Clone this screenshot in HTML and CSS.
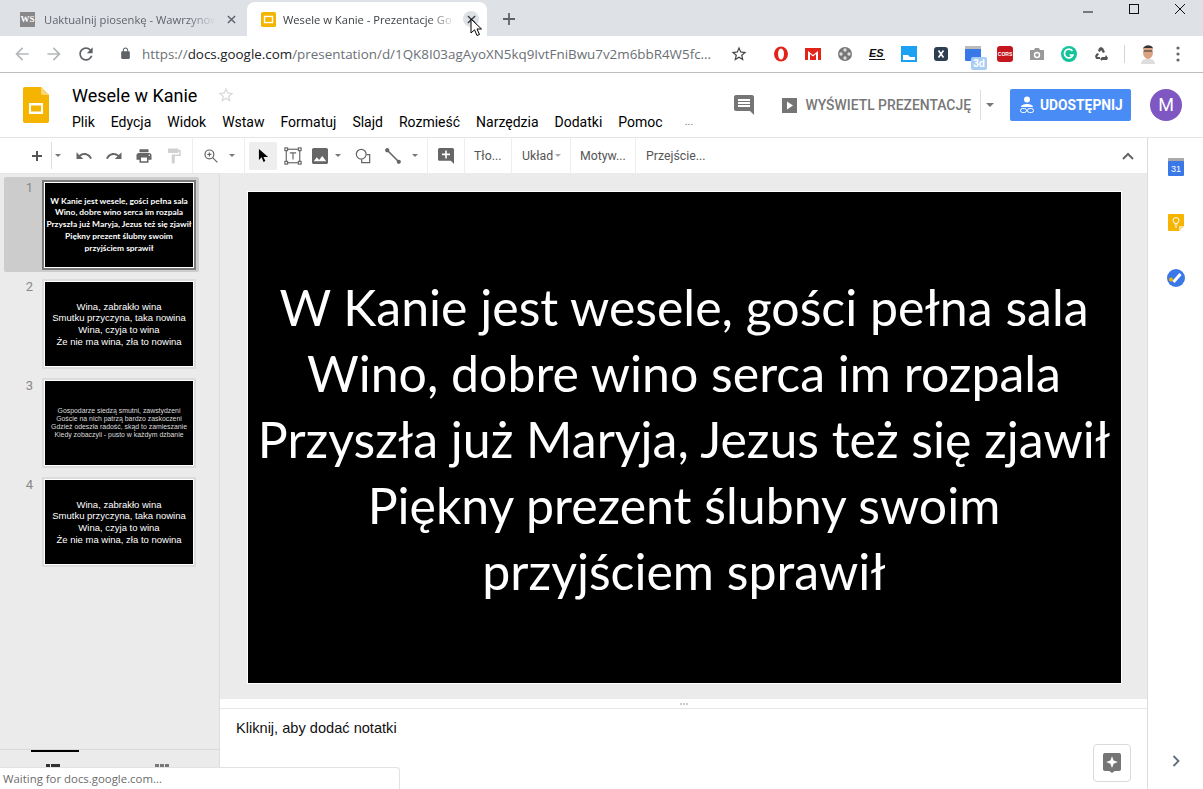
FILE: index.html
```html
<!DOCTYPE html>
<html lang="pl">
<head>
    <meta charset="UTF-8">
    <title>Wesele w Kanie - Prezentacje Google</title>
    <link rel="stylesheet" href="styles.css">
</head>
<body>
    <!-- pasek kart -->
    <div class="tabstrip">
        <div class="tab">
            <span class="favicon-ws">WS</span>
            <span class="tab-title">Uaktualnij piosenkę - Wawrzynow</span>
            <svg class="tab-close" viewBox="0 0 10 10"><path d="M1 1l8 8M9 1l-8 8"/></svg>
        </div>
        <div class="tab tab-active">
            <svg class="favicon" viewBox="0 0 16 16"><rect width="16" height="16" rx="2" fill="#f4b400"/><rect x="3" y="4" width="10" height="8" fill="#fff"/><rect x="4.5" y="5.5" width="7" height="5" fill="#f4b400"/></svg>
            <span class="tab-title">Wesele w Kanie - Prezentacje Go</span>
            <span class="tab-close-round"><svg class="tab-close" viewBox="0 0 10 10"><path d="M1 1l8 8M9 1l-8 8"/></svg></span>
        </div>
        <svg class="new-tab" viewBox="0 0 12 12"><path d="M6 0v12M0 6h12"/></svg>
        <div class="window-controls">
            <svg viewBox="0 0 12 12"><path d="M1 9h10"/></svg>
            <svg viewBox="0 0 12 12"><rect x="1.5" y="1.5" width="9" height="9"/></svg>
            <svg viewBox="0 0 12 12"><path d="M1 1l10 10M11 1l-10 10"/></svg>
        </div>
    </div>

    <!-- pasek adresu -->
    <div class="addressbar">
        <svg class="nav-icon nav-off" viewBox="0 0 24 24"><path d="M20 11H7.83l5.59-5.59L12 4l-8 8 8 8 1.41-1.41L7.83 13H20v-2z"/></svg>
        <svg class="nav-icon nav-off" viewBox="0 0 24 24"><path d="M12 4l-1.41 1.41L16.17 11H4v2h12.17l-5.58 5.59L12 20l8-8z"/></svg>
        <svg class="nav-icon" viewBox="0 0 24 24"><path d="M17.65 6.35C16.2 4.9 14.21 4 12 4c-4.42 0-7.99 3.58-7.99 8s3.57 8 7.99 8c3.73 0 6.84-2.55 7.73-6h-2.08c-.82 2.33-3.04 4-5.65 4-3.31 0-6-2.69-6-6s2.69-6 6-6c1.66 0 3.14.69 4.22 1.78L13 11h7V4l-2.35 2.35z"/></svg>
        <svg class="lock" viewBox="0 0 24 24"><path d="M18 8h-1V6c0-2.76-2.24-5-5-5S7 3.24 7 6v2H6c-1.1 0-2 .9-2 2v10c0 1.1.9 2 2 2h12c1.1 0 2-.9 2-2V10c0-1.1-.9-2-2-2zm-2.9 0H8.9V6c0-1.71 1.39-3.1 3.1-3.1 1.71 0 3.1 1.39 3.1 3.1v2z"/></svg>
        <div class="url"><span class="url-dim">https://</span>docs.google.com<span class="url-dim">/presentation/d/1QK8I03agAyoXN5kq9IvtFniBwu7v2m6bbR4W5fc...</span></div>
        <svg class="url-star" viewBox="0 0 24 24"><path d="M22 9.24l-7.19-.62L12 2 9.19 8.63 2 9.24l5.46 4.73L5.82 21 12 17.27 18.18 21l-1.63-7.03L22 9.24zM12 15.4l-3.76 2.27 1-4.28-3.32-2.88 4.38-.38L12 6.1l1.71 4.04 4.38.38-3.32 2.88 1 4.28L12 15.4z"/></svg>
        <div class="extensions">
            <svg viewBox="0 0 16 16"><ellipse cx="8" cy="8" rx="7" ry="7.5" fill="#e2231a"/><ellipse cx="8" cy="8" rx="3" ry="5.5" fill="#fff"/></svg>
            <svg viewBox="0 0 16 16"><rect y="2" width="16" height="12" fill="#e2231a"/><path d="M3 14V5l5 4 5-4v9z" fill="#fff"/><path d="M5 14V8l3 2.5L11 8v6z" fill="#e2231a"/></svg>
            <svg viewBox="0 0 16 16"><circle cx="8" cy="8" r="7" fill="#777"/><circle cx="8" cy="4" r="1.7" fill="#ddd"/><circle cx="8" cy="12" r="1.7" fill="#ddd"/><circle cx="4" cy="8" r="1.7" fill="#ddd"/><circle cx="12" cy="8" r="1.7" fill="#ddd"/></svg>
            <span class="ext-es">ES</span>
            <svg viewBox="0 0 16 16"><rect width="16" height="16" fill="#1da1f2"/><path d="M2 9h5l2 2h5v3H2z" fill="#fff"/></svg>
            <svg viewBox="0 0 16 16"><rect x="1" y="1" width="14" height="14" rx="3" fill="#2c3e50"/><path d="M5.5 4.5l5 7M10.5 4.5l-5 7" stroke="#fff" stroke-width="1.6"/></svg>
            <span class="ext-3d"><svg viewBox="0 0 16 16"><rect y="2" width="16" height="13" rx="1" fill="#3b78e7"/><rect y="0" width="16" height="3" fill="#bbb"/></svg><b>3d</b></span>
            <span class="ext-cors">CORS</span>
            <svg viewBox="0 0 16 16"><path d="M1 4h4l1-2h4l1 2h4v10H1z" fill="#999"/><circle cx="8" cy="9" r="3.2" fill="#fff"/><circle cx="8" cy="9" r="1.8" fill="#999"/></svg>
            <svg viewBox="0 0 16 16"><circle cx="8" cy="8" r="8" fill="#15c39a"/><path d="M11.5 5A4.4 4.4 0 1 0 12 9H8.6" fill="none" stroke="#fff" stroke-width="1.7"/></svg>
            <svg viewBox="0 0 16 16"><path d="M6 2l2-1 2 1 2 4-2 1-2-3-1 2-2-1zM2 10l2-3 2 1-2 3h3v2H3zM9 11h3l1-2 2 3-1 2H9v1l-2-2 2-2z" fill="#555"/></svg>
        </div>
        <div class="ext-separator"></div>
        <svg class="profile-face" viewBox="0 0 16 20"><path d="M1 20c0-4 3-5 7-5s7 1 7 5z" fill="#ddd"/><ellipse cx="8" cy="8" rx="5" ry="7" fill="#d9a283"/><path d="M3 5c0-4 10-5 10 0l-1-1H4z" fill="#333"/><path d="M4 7h8" stroke="#333"/></svg>
        <svg class="chrome-menu" viewBox="0 0 4 16"><circle cx="2" cy="2" r="1.6"/><circle cx="2" cy="8" r="1.6"/><circle cx="2" cy="14" r="1.6"/></svg>
    </div>

    <!-- naglowek dokumentu -->
    <header class="docs-header">
        <svg class="slides-logo" viewBox="0 0 26 36"><path d="M2 0h16l8 8v26a2 2 0 0 1-2 2H2a2 2 0 0 1-2-2V2a2 2 0 0 1 2-2z" fill="#f4b400"/><path d="M18 0l8 8h-6a2 2 0 0 1-2-2z" fill="#f8d775"/><rect x="6" y="16" width="14" height="11" fill="#fff"/><rect x="8" y="18.500" width="10" height="6" fill="#f4b400"/></svg>
        <div class="doc-info">
            <div class="doc-title-row">
                <span class="doc-title">Wesele w Kanie</span>
                <svg class="doc-star" viewBox="0 0 24 24"><path d="M22 9.24l-7.19-.62L12 2 9.19 8.63 2 9.24l5.46 4.73L5.82 21 12 17.27 18.18 21l-1.63-7.03L22 9.24zM12 15.4l-3.76 2.27 1-4.28-3.32-2.88 4.38-.38L12 6.1l1.71 4.04 4.38.38-3.32 2.88 1 4.28L12 15.4z"/></svg>
            </div>
            <ul class="menu">
                <li>Plik</li>
                <li>Edycja</li>
                <li>Widok</li>
                <li>Wstaw</li>
                <li>Formatuj</li>
                <li>Slajd</li>
                <li>Rozmieść</li>
                <li>Narzędzia</li>
                <li>Dodatki</li>
                <li>Pomoc</li>
                <li class="menu-more">...</li>
            </ul>
        </div>
        <div class="header-actions">
            <svg class="comments-icon" viewBox="0 0 24 24"><path d="M21.99 4c0-1.1-.89-2-1.99-2H4c-1.1 0-2 .9-2 2v12c0 1.1.9 2 2 2h14l4 4-.01-18zM18 14H6v-2h12v2zm0-3H6V9h12v2zm0-3H6V6h12v2z"/></svg>
            <svg class="present-icon" viewBox="0 0 15 15"><rect width="15" height="15" fill="#757575"/><path d="M5 3.500l6 4-6 4z" fill="#fff"/></svg>
            <span class="present-label">WYŚWIETL PREZENTACJĘ</span>
            <span class="present-split"></span>
            <span class="caret caret-big"></span>
            <button class="share-btn">
                <svg viewBox="0 0 16 18"><circle cx="8" cy="3.500" r="3" fill="#fff"/><path d="M2 11c0-2 3-3 6-3s6 1 6 3z" fill="#fff"/><rect x="1.500" y="12.500" width="6" height="4" rx="2" fill="none" stroke="#fff"/><rect x="8.500" y="12.500" width="6" height="4" rx="2" fill="none" stroke="#fff"/></svg>
                UDOSTĘPNIJ
            </button>
            <span class="avatar">M</span>
        </div>
    </header>

    <div class="workspace">
        <div class="editor">
            <!-- pasek narzedzi -->
            <div class="toolbar">
                <svg class="tb-plus" viewBox="0 0 12 12"><path d="M6 1v10M1 6h10"/></svg>
                <span class="tb-split"></span>
                <span class="caret tb-caret"></span>
                <svg class="tb-icon tb-undo" viewBox="0 0 24 24"><path d="M12.500 8c-2.650 0-5.050.99-6.900 2.600L2 7v9h9l-3.620-3.620c1.390-1.160 3.160-1.880 5.120-1.880 3.540 0 6.550 2.310 7.600 5.500l2.370-.78C21.080 11.030 17.150 8 12.500 8z"/></svg>
                <svg class="tb-icon" viewBox="0 0 24 24"><path d="M18.400 10.600C16.550 8.990 14.150 8 11.500 8c-4.650 0-8.580 3.030-9.960 7.220L3.900 16c1.050-3.190 4.050-5.500 7.600-5.500 1.950 0 3.730.72 5.120 1.880L13 16h9V7l-3.600 3.600z"/></svg>
                <svg class="tb-icon" viewBox="0 0 24 24"><path d="M19 8H5c-1.660 0-3 1.340-3 3v6h4v4h12v-4h4v-6c0-1.660-1.340-3-3-3zm-3 11H8v-5h8v5zm3-7c-.55 0-1-.45-1-1s.45-1 1-1 1 .45 1 1-.45 1-1 1zm-1-9H6v4h12V3z"/></svg>
                <svg class="tb-icon tb-faded" viewBox="0 0 24 24"><path d="M18 4V3c0-.55-.45-1-1-1H5c-.55 0-1 .45-1 1v4c0 .55.45 1 1 1h12c.55 0 1-.45 1-1V6h1v4H9v11c0 .55.45 1 1 1h2c.55 0 1-.45 1-1v-9h8V4h-3z"/></svg>
                <span class="tb-sep tb-sep-a"></span>
                <svg class="tb-icon tb-zoom" viewBox="0 0 20 20"><circle cx="8" cy="8" r="5.500"/><path d="M12 12l6 6M8 5.500v5M5.500 8h5"/></svg>
                <span class="caret tb-caret tb-caret-zoom"></span>
                <span class="tb-sep tb-sep-b"></span>
                <span class="tb-select"><svg viewBox="0 0 12 16"><path d="M1 1v12l3-3 2 5 2-1-2-4.500h5z"/></svg></span>
                <svg class="tb-textbox" viewBox="0 0 20 20"><rect x="2.500" y="2.500" width="15" height="15"/><rect x="1" y="1" width="3" height="3"/><rect x="16" y="1" width="3" height="3"/><rect x="1" y="16" width="3" height="3"/><rect x="16" y="16" width="3" height="3"/><path d="M6.500 6.500h7M10 6.500v7.500"/></svg>
                <svg class="tb-icon tb-image" viewBox="3 3 18 18"><path d="M21 19V5c0-1.100-.9-2-2-2H5c-1.100 0-2 .9-2 2v14c0 1.100.9 2 2 2h14c1.100 0 2-.9 2-2zM8.500 13.500l2.500 3.010L14.500 12l4.500 6H5l3.500-4.500z"/></svg>
                <span class="caret tb-caret tb-caret-image"></span>
                <svg class="tb-shape" viewBox="0 0 18 18"><circle cx="7" cy="7" r="5.500"/><path d="M13 7.500h3.500v9H7.500V13"/></svg>
                <svg class="tb-line" viewBox="0 0 18 18"><path d="M2.500 2.500l13 13"/><circle cx="2.500" cy="2.500" r="1.500"/><circle cx="15.500" cy="15.500" r="1.500"/></svg>
                <span class="caret tb-caret tb-caret-line"></span>
                <span class="tb-sep tb-sep-c"></span>
                <svg class="tb-icon tb-newcomment" viewBox="2 2 20 20"><path d="M22 4c0-1.100-.9-2-2-2H4c-1.100 0-2 .9-2 2v12c0 1.100.9 2 2 2h14l4 4zM17 11h-4v4h-2v-4H7V9h4V5h2v4h4z"/></svg>
                <span class="tb-sep tb-sep-d"></span>
                <span class="tb-text tb-bg">Tło...</span>
                <span class="tb-sep"></span>
                <span class="tb-text tb-layout">Układ</span>
                <span class="caret tb-caret tb-caret-layout"></span>
                <span class="tb-sep tb-sep-layout"></span>
                <span class="tb-text tb-theme">Motyw...</span>
                <span class="tb-sep"></span>
                <span class="tb-text tb-trans">Przejście...</span>
                <svg class="tb-collapse" viewBox="0 0 12 8"><path d="M1 7l5-5 5 5"/></svg>
            </div>

            <div class="editor-body">
                <!-- miniatury -->
                <aside class="filmstrip">
                    <div class="thumbs">
                        <div class="thumb-row thumb-selected">
                            <span class="thumb-num">1</span>
                            <div class="thumb"><p class="thumb-text thumb-text-one">W Kanie jest wesele, gości pełna sala<br>Wino, dobre wino serca im rozpala<br>Przyszła już Maryja, Jezus też się zjawił<br>Piękny prezent ślubny swoim<br>przyjściem sprawił</p></div>
                        </div>
                        <div class="thumb-row">
                            <span class="thumb-num">2</span>
                            <div class="thumb"><p class="thumb-text">Wina, zabrakło wina<br>Smutku przyczyna, taka nowina<br>Wina, czyja to wina<br>Że nie ma wina, zła to nowina</p></div>
                        </div>
                        <div class="thumb-row">
                            <span class="thumb-num">3</span>
                            <div class="thumb"><p class="thumb-text thumb-text-small">Gospodarze siedzą smutni, zawstydzeni<br>Goście na nich patrzą bardzo zaskoczeni<br>Gdzież odeszła radość, skąd to zamieszanie<br>Kiedy zobaczyli - pusto w każdym dzbanie</p></div>
                        </div>
                        <div class="thumb-row">
                            <span class="thumb-num">4</span>
                            <div class="thumb"><p class="thumb-text">Wina, zabrakło wina<br>Smutku przyczyna, taka nowina<br>Wina, czyja to wina<br>Że nie ma wina, zła to nowina</p></div>
                        </div>
                    </div>
                    <div class="view-switch">
                        <div class="view-tab view-tab-on">
                            <svg class="view-glyph" viewBox="0 0 14 10"><rect width="4" height="10"/><rect x="5" width="9" height="4"/><rect x="5" y="5" width="9" height="5"/></svg>
                        </div>
                        <div class="view-tab">
                            <svg class="view-glyph view-glyph-off" viewBox="0 0 14 10"><rect width="4" height="4"/><rect x="5" width="4" height="4"/><rect x="10" width="4" height="4"/><rect y="5" width="4" height="4"/><rect x="5" y="5" width="4" height="4"/><rect x="10" y="5" width="4" height="4"/></svg>
                        </div>
                    </div>
                </aside>

                <!-- slajd i notatki -->
                <main class="stage">
                    <div class="canvas">
                        <div class="slide">
                            <p>W Kanie jest wesele, gości pełna sala<br>Wino, dobre wino serca im rozpala<br>Przyszła już Maryja, Jezus też się zjawił<br>Piękny prezent ślubny swoim<br>przyjściem sprawił</p>
                        </div>
                    </div>
                    <div class="notes-grip"><span></span><span></span><span></span></div>
                    <div class="notes">
                        <span class="notes-text">Kliknij, aby dodać notatki</span>
                        <div class="explore-btn"><svg viewBox="0 0 20 22"><path d="M2 0h16a2 2 0 0 1 2 2v16a2 2 0 0 1-2 2h-5l-3 2-3-2H2a2 2 0 0 1-2-2V2a2 2 0 0 1 2-2z" fill="#757575"/><path d="M10 3.500l1.800 4.700 4.700 1.800-4.700 1.800-1.800 4.700-1.800-4.700L3.500 10l4.700-1.800z" fill="#fff"/></svg></div>
                    </div>
                </main>
            </div>
        </div>

        <!-- panel boczny -->
        <aside class="side-panel">
            <svg class="side-icon side-cal" viewBox="0 0 16 18"><rect width="16" height="4" fill="#aaa"/><rect y="3" width="16" height="15" rx="1" fill="#3b78e7"/><text x="8" y="14" class="cal-day">31</text></svg>
            <svg class="side-icon side-keep" viewBox="0 0 16 17"><path d="M1 0h14a1 1 0 0 1 1 1v11l-5 5H1a1 1 0 0 1-1-1V1a1 1 0 0 1 1-1z" fill="#f4b400"/><path d="M16 12l-5 5v-4a1 1 0 0 1 1-1z" fill="#fbe29a"/><circle cx="8" cy="6.500" r="3" fill="none" stroke="#fff"/><path d="M6.500 11h3M7 13h2" stroke="#fff"/></svg>
            <svg class="side-icon side-tasks" viewBox="0 0 18 18"><circle cx="9" cy="9" r="9" fill="#3b78e7"/><circle cx="4" cy="10.500" r="2" fill="#f4b400"/><path d="M6.500 13l7-8" stroke="#fff" stroke-width="3"/></svg>
            <svg class="side-expand" viewBox="0 0 8 12"><path d="M1.500 1l5 5-5 5"/></svg>
        </aside>
    </div>

    <div class="status-bubble">Waiting for docs.google.com...</div>
    <svg class="mouse-pointer" viewBox="0 0 12 19"><path d="M1 1v14l3.500-3.200L7 17.500l2.500-1-2.500-5.500h4.500z"/></svg>
</body>
</html>
```

FILE: styles.css
```css
* {
    margin: 0;
    padding: 0;
    box-sizing: border-box;
}

html, body {
    width: 1203px;
    height: 789px;
    overflow: hidden;
}

body {
    position: relative;
    display: flex;
    flex-direction: column;
    background: #fff;
    color: #000;
    font-family: Roboto, "Liberation Sans", sans-serif;
    font-size: 14px;
}

svg {
    display: block;
    flex: none;
}

/* tabs */
.tabstrip {
    display: flex;
    height: 36px;
    padding: 2px 0 0 7px;
    background: #dee1e6;
    flex: none;
}

.tab {
    display: flex;
    align-items: center;
    width: 233px;
    height: 34px;
    padding: 0 4px 0 13px;
    color: #5f6368;
    font-family: "Open Sans", sans-serif;
    font-size: 11.2px;
}

.tab-active {
    width: 240px;
    margin-left: 7px;
    padding: 0 8px 0 14px;
    background: #fff;
    border-radius: 8px 8px 0 0;
    color: #3c4043;
}

.favicon-ws {
    display: block;
    flex: none;
    width: 15px;
    height: 15px;
    background: #888;
    color: #fff;
    font: bold 9px/15px "Liberation Serif", serif;
    text-align: center;
}

.favicon {
    width: 15px;
    height: 15px;
    flex: none;
}

.tab-title {
    flex: 1;
    margin-left: 9px;
    white-space: nowrap;
    -webkit-mask-image: linear-gradient(to right, #000 82%, transparent 98%);
    mask-image: linear-gradient(to right, #000 82%, transparent 98%);
}

.tab-active .tab-title {
    margin-left: 7px;
}

.tab-close {
    width: 9px;
    height: 9px;
    margin-left: 8px;
    fill: none;
    stroke: #5f6368;
    stroke-width: 1.6;
}

.tab-close-round {
    display: flex;
    align-items: center;
    justify-content: center;
    width: 16px;
    height: 16px;
    margin-left: 3px;
    border-radius: 50%;
    background: #dee1e6;
}

.tab-close-round .tab-close {
    margin: 0;
    stroke: #3c4043;
}

.new-tab {
    width: 12px;
    height: 12px;
    margin: 11px 0 0 16px;
    fill: none;
    stroke: #5f6368;
    stroke-width: 1.8;
}

.window-controls {
    display: flex;
    gap: 34px;
    margin: -2px 0 0 auto;
    padding: 3px 17px 0 0;
}

.window-controls svg {
    width: 12px;
    height: 12px;
    fill: none;
    stroke: #111;
    stroke-width: 1;
}

/* address bar */
.addressbar {
    display: flex;
    align-items: center;
    height: 37px;
    padding: 0 0 1px 12px;
    border-bottom: 1px solid #bdbdbd;
    background: #fff;
    flex: none;
}

.nav-icon {
    width: 20px;
    height: 20px;
    margin-right: 12px;
    fill: #5f6368;
}

.nav-off {
    fill: #b5b8bb;
}

.lock {
    width: 13px;
    height: 13px;
    margin-left: 11px;
    fill: #5f6368;
}

.url {
    width: 578px;
    margin-left: 10px;
    color: #202124;
    font-family: "Open Sans", sans-serif;
    font-size: 13.4px;
    white-space: nowrap;
}

.url-dim {
    color: #6b7075;
}

.url-star {
    width: 18px;
    height: 18px;
    margin-left: 10px;
    fill: #444;
}

.extensions {
    display: flex;
    align-items: center;
    gap: 16px;
    margin-left: 25px;
}

.extensions > svg {
    width: 16px;
    height: 16px;
}

.ext-es {
    width: 16px;
    font: italic bold 11px/12px "Liberation Sans", sans-serif;
    border-bottom: 1px solid #111;
    color: #111;
}

.ext-3d {
    position: relative;
    display: block;
    width: 16px;
    height: 16px;
}

.ext-3d svg {
    width: 16px;
    height: 16px;
}

.ext-3d b {
    position: absolute;
    left: 6px;
    top: 11px;
    width: 16px;
    height: 13px;
    border-radius: 2px;
    background: #a8cdf2;
    color: #fff;
    font: bold 10px/13px "Liberation Sans", sans-serif;
    text-align: center;
}

.ext-cors {
    display: block;
    width: 16px;
    height: 16px;
    border-radius: 3px;
    background: #c5161d;
    color: #fff;
    font: bold 5px/16px "Liberation Sans", sans-serif;
    text-align: center;
}

.ext-separator {
    width: 1px;
    height: 18px;
    margin-left: 15px;
    background: #d5d5d5;
}

.profile-face {
    width: 16px;
    height: 20px;
    margin-left: 15px;
}

.chrome-menu {
    width: 4px;
    height: 16px;
    margin-left: 20px;
    fill: #666;
}

/* docs header */
.docs-header {
    display: flex;
    height: 65px;
    padding-left: 23px;
    border-bottom: 1px solid #e5e5e5;
    flex: none;
}

.slides-logo {
    width: 26px;
    height: 36px;
    margin-top: 14px;
}

.doc-info {
    margin-left: 23px;
    padding-top: 11px;
}

.doc-title-row {
    display: flex;
    align-items: center;
    height: 22px;
}

.doc-title {
    font-size: 18px;
}

.doc-star {
    width: 18px;
    height: 18px;
    margin-left: 20px;
    fill: #d8d8d8;
}

.menu {
    display: flex;
    gap: 16px;
    margin-top: 6px;
    list-style: none;
    line-height: 20px;
}

.menu-more {
    margin-left: 6px;
    color: #777;
    font-size: 11px;
}

.header-actions {
    display: flex;
    align-items: center;
    height: 32px;
    margin: 16px 0 0 auto;
    padding-right: 21px;
}

.comments-icon {
    width: 24px;
    height: 24px;
    fill: #757575;
}

.present-icon {
    width: 15px;
    height: 15px;
    margin-left: 26px;
}

.present-label {
    margin-left: 9px;
    color: #777;
    font-weight: 500;
    font-size: 13.9px;
    white-space: nowrap;
}

.present-split {
    width: 1px;
    height: 30px;
    margin-left: 9px;
    background: #ddd;
}

.caret {
    display: block;
    flex: none;
    width: 0;
    height: 0;
    border-left: 3px solid transparent;
    border-right: 3px solid transparent;
    border-top: 3px solid #777;
}

.caret-big {
    margin-left: 5px;
    border-width: 4px 4px 0;
}

.share-btn {
    display: flex;
    align-items: center;
    gap: 5px;
    width: 121px;
    height: 32px;
    margin-left: 16px;
    padding-left: 9px;
    border: 0;
    border-radius: 2px;
    background: #4a8cf6;
    color: #fff;
    font: bold 13.8px Roboto, sans-serif;
}

.share-btn svg {
    width: 16px;
    height: 18px;
}

.avatar {
    display: block;
    width: 32px;
    height: 32px;
    margin-left: 19px;
    border-radius: 50%;
    background: #7e57c2;
    color: #fff;
    font-size: 18px;
    line-height: 32px;
    text-align: center;
}

/* below the header */
.workspace {
    display: flex;
    flex: 1;
    min-height: 0;
}

.editor {
    display: flex;
    flex-direction: column;
    width: 1147px;
    flex: none;
}

.side-panel {
    display: flex;
    flex-direction: column;
    align-items: center;
    width: 56px;
    padding-top: 20px;
    border-left: 1px solid #dcdcdc;
}

.side-icon {
    width: 16px;
}

.side-cal {
    height: 18px;
}

.cal-day {
    fill: #fff;
    font-family: "Liberation Sans", sans-serif;
    font-size: 9px;
    text-anchor: middle;
}

.side-keep {
    height: 17px;
    margin-top: 38px;
}

.side-tasks {
    width: 18px;
    height: 18px;
    margin-top: 38px;
}

.side-expand {
    width: 8px;
    height: 12px;
    margin-top: auto;
    margin-bottom: 22px;
    fill: none;
    stroke: #5f6b78;
    stroke-width: 1.800;
}

/* toolbar */
.toolbar {
    display: flex;
    align-items: center;
    height: 35px;
    padding-left: 31px;
    background: #fff;
    color: #555;
    font-size: 12.3px;
    flex: none;
}

.tb-plus {
    width: 12px;
    height: 12px;
    fill: none;
    stroke: #555;
    stroke-width: 2;
}

.tb-split {
    width: 1px;
    height: 27px;
    margin-left: 8px;
    background: #ddd;
}

.tb-caret {
    margin-left: 3px;
}

.tb-icon {
    width: 18px;
    height: 18px;
    margin-left: 12px;
    fill: #666;
}

.tb-undo {
    margin-left: 14px;
}

.tb-faded {
    fill: #d0d0d0;
}

.tb-sep {
    width: 1px;
    height: 35px;
    margin: 0 10px;
    background: #eee;
    flex: none;
}

.tb-sep-a {
    margin: 0 0 0 9px;
}

.tb-zoom {
    width: 16px;
    height: 16px;
    margin-left: 10px;
    fill: none;
    stroke: #666;
    stroke-width: 1.500;
}

.tb-caret-zoom {
    margin-left: 10px;
}

.tb-sep-b {
    margin: 0 0 0 9px;
}

.tb-select {
    display: flex;
    align-items: center;
    justify-content: center;
    width: 28px;
    height: 28px;
    margin-left: 4px;
    border-radius: 2px;
    background: #eee;
}

.tb-select svg {
    width: 11px;
    height: 15px;
}

.tb-textbox {
    width: 18px;
    height: 18px;
    margin-left: 7px;
    fill: #fff;
    stroke: #666;
    stroke-width: 1.300;
}

.tb-image {
    width: 16px;
    height: 16px;
    margin-left: 10px;
}

.tb-caret-image {
    margin-left: 7px;
}

.tb-shape {
    width: 16px;
    height: 16px;
    margin-left: 14px;
    fill: none;
    stroke: #666;
    stroke-width: 1.400;
}

.tb-line {
    width: 16px;
    height: 16px;
    margin-left: 14px;
    fill: #666;
    stroke: #666;
    stroke-width: 1.800;
}

.tb-caret-line {
    margin-left: 11px;
}

.tb-sep-c {
    margin: 0 0 0 9px;
}

.tb-newcomment {
    width: 16px;
    height: 16px;
    margin-left: 10px;
}

.tb-sep-d {
    margin: 0 0 0 10px;
}

.tb-bg {
    margin-left: 9px;
    width: 27px;
}

.tb-layout {
    width: 31px;
}

.tb-caret-layout {
    margin-left: 2px;
    border-top-color: #aaa;
}

.tb-sep-layout {
    margin: 0 9px;
}

.tb-theme {
    width: 45px;
}

.tb-trans {
    width: 60px;
}

.tb-collapse {
    width: 12px;
    height: 8px;
    margin-left: auto;
    margin-right: 13px;
    fill: none;
    stroke: #666;
    stroke-width: 2;
}

/* filmstrip */
.editor-body {
    display: flex;
    flex: 1;
    min-height: 0;
}

.filmstrip {
    display: flex;
    flex-direction: column;
    width: 220px;
    flex: none;
    border-right: 1px solid #ddd;
    background: #ebebeb;
    border-top: 1px solid #e6e6e6;
}

.thumbs {
    flex: 1;
    padding: 3px 0 0 4px;
}

.thumb-row {
    display: flex;
    width: 195px;
    height: 95px;
    margin-bottom: 4px;
    padding-top: 5px;
    border-radius: 2px;
}

.thumb-selected {
    background: #ccc;
}

.thumb-num {
    width: 39px;
    padding-right: 10px;
    color: #888;
    font-size: 13px;
    line-height: 12px;
    text-align: right;
}

.thumb {
    display: flex;
    align-items: center;
    justify-content: center;
    width: 150px;
    height: 86px;
    margin-left: 1px;
    background: #000;
    border: 1px solid #fff;
    outline: 2px solid #dcdcdc;
}

.thumb-selected .thumb {
    outline-color: #7a7a7a;
}

.thumb-text {
    color: #fff;
    font-family: "Liberation Sans", sans-serif;
    font-size: 9.500px;
    line-height: 11.700px;
    text-align: center;
    white-space: nowrap;
}

.thumb-text-one {
    font-family: Lato, sans-serif;
    font-size: 8.400px;
    font-weight: 700;
    line-height: 11.800px;
}

.thumb-text-small {
    font-size: 6.900px;
    line-height: 8px;
    color: #ddd;
}

.view-switch {
    display: flex;
    height: 40px;
    border-top: 1px solid #d8d8d8;
    flex: none;
}

.view-tab {
    flex: 1;
    display: flex;
    justify-content: center;
    padding: 14px 4px 0 0;
}

.view-tab-on {
    position: relative;
}

.view-tab-on::before {
    content: "";
    position: absolute;
    top: 0;
    left: 31px;
    width: 48px;
    height: 2px;
    background: #000;
}

.view-glyph {
    width: 14px;
    height: 10px;
    fill: #333;
}

.view-glyph-off {
    fill: #777;
}

/* slide area */
.stage {
    display: flex;
    flex-direction: column;
    flex: 1;
    min-width: 0;
}

.canvas {
    display: flex;
    justify-content: center;
    height: 526px;
    padding-top: 18px;
    background: #ebebeb;
    flex: none;
}

.slide {
    display: flex;
    align-items: center;
    justify-content: center;
    width: 875px;
    height: 493px;
    margin-left: 1px;
    border: 1px solid #fff;
    background: #000;
}

.slide p {
    padding-top: 2px;
    color: #fff;
    font-family: Lato, sans-serif;
    font-size: 50px;
    line-height: 66px;
    text-align: center;
    white-space: nowrap;
}

.notes-grip {
    display: flex;
    align-items: center;
    justify-content: center;
    gap: 1px;
    height: 10px;
    border-bottom: 1px solid #e8e8e8;
    flex: none;
}

.notes-grip span {
    width: 2px;
    height: 2px;
    background: #ccc;
}

.notes {
    display: flex;
    flex: 1;
    position: relative;
    padding: 11px 16px;
}

.notes-text {
    font-family: "Liberation Sans", sans-serif;
    font-size: 14.6px;
    line-height: 16px;
    color: #111;
}

.explore-btn {
    position: absolute;
    right: 16px;
    top: 35px;
    display: flex;
    align-items: center;
    justify-content: center;
    width: 38px;
    height: 38px;
    border: 1px solid #dadada;
    border-radius: 4px;
    background: #fff;
}

.explore-btn svg {
    width: 18px;
    height: 20px;
}

/* overlays */
.status-bubble {
    position: absolute;
    left: 0;
    bottom: 0;
    width: 400px;
    height: 22px;
    padding-left: 3px;
    border: 1px solid #e2e2e2;
    border-left: 0;
    border-bottom: 0;
    border-radius: 0 4px 0 0;
    background: #fff;
    color: #6b6b6b;
    font-family: "Open Sans", sans-serif;
    font-size: 11.4px;
    line-height: 22px;
}

.mouse-pointer {
    position: absolute;
    left: 470px;
    top: 18px;
    width: 12px;
    height: 19px;
    fill: #fff;
    stroke: #000;
    stroke-width: 1;
}
```
